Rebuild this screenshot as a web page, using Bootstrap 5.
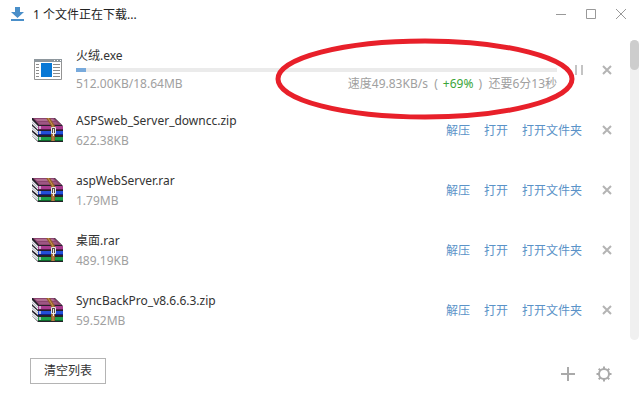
<!DOCTYPE html>
<html lang="zh-CN">
<head>
<meta charset="utf-8">
<meta name="viewport" content="width=device-width, initial-scale=1">
<title>下载</title>
<link href="https://cdn.jsdelivr.net/npm/bootstrap@5.3.0/dist/css/bootstrap.min.css" rel="stylesheet">
<style>
body{font-family:"Noto Sans","Noto Sans CJK SC",sans-serif;font-size:12px;line-height:20px;color:#333;background:#fff}
svg{display:block;flex:none}
.title-bar{height:28px;padding:0 5px 0 10px}
.title-text{padding-top:2px;color:#222}
.icon-btn{border:0;background:none;padding:0;color:#aaa;display:flex;align-items:center;justify-content:center;width:20px;height:20px}
.remove-btn{color:#b4b4b4}
.win-btn{width:30px;height:28px;color:#999}
.list-area{padding-top:12px;padding-right:2px}
.file-row{height:60px;padding:0 13px 0 30px}
.file-icon{width:36px}
.file-main{margin-left:10px;min-width:0}
.file-done{padding-top:2px}
.file-size{color:#a0a0a0}
.file-links{gap:14px;margin-right:15px;padding-top:2px}
.file-link{color:#5b93c8;text-decoration:none}
.dl-bar{height:4px;margin:2px 0;border-radius:0;background:#ebebeb}
.dl-bar .progress-bar{background:#78aadc}
.pause-btn{margin:0 8px 0 12px}
.gain{color:#3aa53a;margin:0 2px}
.ring{position:absolute;right:-18px;top:-36px;pointer-events:none;z-index:2}
.scroll-track{width:9px;background:#f0f0f0;border-radius:5px}
.scroll-thumb{height:30px;background:#cdcdcd;border-radius:5px}
.bottom-bar{padding:18px 27px 17px 30px}
.bottom-tools{gap:16px;margin-top:6px}
.clear-btn{border:1px solid #b4b4b4;border-radius:0;font-size:12px;line-height:18px;padding:3px 13px;color:#333;background:#fff}
</style>
<script src="https://cdn.jsdelivr.net/npm/bootstrap@5.3.0/dist/js/bootstrap.bundle.min.js"></script>
</head>
<body>
<svg width="0" height="0" class="position-absolute" aria-hidden="true">
<symbol id="books" viewBox="0 0 34 26">
<path d="M2 1h23l8 8v16H8l-6-6z" fill="#26202a"/>
<path d="M3 1h21l8 7H9z" fill="#8c4470"/><path d="M5 2h18l2 2H7z" fill="#b06f94"/><path d="M8 5h18l2 2H10z" fill="#9d5783"/>
<path d="M8 9h25v3H8z" fill="#a83c90"/><path d="M8 12h25v1H8z" fill="#5c1c4c"/>
<path d="M8 14h25v3H8z" fill="#2350d8"/><path d="M8 17h25v1H8z" fill="#10208a"/>
<path d="M8 20h25v3H8z" fill="#1fa048"/><path d="M8 23h25v1H8z" fill="#0d6a2c"/>
<path d="m2 3 6 6v4L2 7zM2 9l6 5v4l-6-5zM2 15l6 5v4l-6-5z" fill="#ececf1"/>
<path d="m2 5 6 6M2 11l6 5M2 17l6 5" stroke="#a4a8b2" stroke-width=".7"/>
<path d="M2 8l6 5.500M2 14l6 5" stroke="#2b2830"/>
<path d="M10 9v3M10 14v3M10 20v3" stroke="#e0cfe6" stroke-width="1.500"/>
<path d="m16 1 5 8v15h4V9l-5-8z" fill="#94602c"/><path d="m18 1 5 8v15" fill="none" stroke="#c9984e"/>
<path d="M21.500 10.500h4v6h-4z" fill="#554a44" stroke="#e4e4e4"/><path d="M23 12h1v7h-1z" fill="#eee"/>
</symbol>
<symbol id="cross" viewBox="0 0 10 10"><path d="m1 1 8 8m0-8-8 8" stroke="currentColor" stroke-width="2"/></symbol>
</svg>

<header class="title-bar d-flex align-items-center">
<svg width="15" height="15" viewBox="0 0 15 15" aria-hidden="true"><path d="M5 0h5v5h4l-6.500 6L1 5h4zM1 12h13v2H1z" fill="#4a8fc9"/></svg>
<span class="title-text ms-2">1 个文件正在下载...</span>
<div class="d-flex ms-auto">
<button class="icon-btn win-btn" aria-label="最小化"><svg width="10" height="11"><path d="M0 5.500h10" stroke="currentColor"/></svg></button>
<button class="icon-btn win-btn" aria-label="最大化"><svg width="10" height="10"><path d="M.5.5h9v9h-9z" fill="none" stroke="currentColor"/></svg></button>
<button class="icon-btn win-btn" aria-label="关闭"><svg width="10" height="10"><path d="m0 0 10 10m0-10-10 10" stroke="currentColor"/></svg></button>
</div>
</header>

<main class="list-area d-flex">
<div class="flex-grow-1">
<div class="file-row d-flex align-items-center">
<div class="file-icon"><svg class="ms-1" width="28" height="22" viewBox="0 0 28 22" aria-hidden="true"><path d="M.5.5h27v20H.5z" fill="#fff" stroke="#939393"/><path d="M0 0h28v3H0z" fill="#8e979d"/><path d="M20 1h1v1h-1zm3 0h1v1h-1zm3 0h1v1h-1z" fill="#fff"/><path d="M7 4h11v14H7z" fill="#0878d5"/><path d="M2 5.500h3M2 8.500h3M2 11.500h3M2 14.500h3M2 17.500h3M19 5.500h7M19 8.500h7M19 11.500h7M19 14.500h7M19 17.500h7" stroke="#8c8c8c"/></svg></div>
<div class="file-main flex-grow-1">
<div class="text-truncate">火绒.exe</div>
<div class="progress dl-bar" role="progressbar" aria-label="下载进度" aria-valuenow="2" aria-valuemin="0" aria-valuemax="100"><div class="progress-bar" style="width:2%"></div></div>
<div class="file-size d-flex justify-content-between"><span>512.00KB/18.64MB</span>
<span class="position-relative">速度49.83KB/s&nbsp;&nbsp;( <span class="gain">+69%</span> )&nbsp;&nbsp;还要6分13秒
<svg class="ring" width="300" height="82" viewBox="0 0 300 82" aria-hidden="true"><ellipse cx="150" cy="41" rx="147" ry="38" fill="none" stroke="#e8202a" stroke-width="5"/></svg></span></div>
</div>
<button class="icon-btn pause-btn" aria-label="暂停"><svg width="8" height="10"><path d="M1 0v10M7 0v10" stroke="#c4c4c4" stroke-width="2"/></svg></button>
<button class="icon-btn remove-btn" aria-label="移除 火绒.exe"><svg width="10" height="10"><use href="#cross"/></svg></button>
</div>

<div class="file-row d-flex align-items-center">
<div class="file-icon"><svg width="34" height="26"><use href="#books"/></svg></div>
<div class="file-main file-done flex-grow-1"><div class="text-truncate">ASPSweb_Server_downcc.zip</div><div class="file-size">622.38KB</div></div>
<div class="file-links d-flex"><a class="file-link" href="#">解压</a><a class="file-link" href="#">打开</a><a class="file-link" href="#">打开文件夹</a></div>
<button class="icon-btn remove-btn" aria-label="移除 ASPSweb_Server_downcc.zip"><svg width="10" height="10"><use href="#cross"/></svg></button>
</div>
<div class="file-row d-flex align-items-center">
<div class="file-icon"><svg width="34" height="26"><use href="#books"/></svg></div>
<div class="file-main file-done flex-grow-1"><div class="text-truncate">aspWebServer.rar</div><div class="file-size">1.79MB</div></div>
<div class="file-links d-flex"><a class="file-link" href="#">解压</a><a class="file-link" href="#">打开</a><a class="file-link" href="#">打开文件夹</a></div>
<button class="icon-btn remove-btn" aria-label="移除 aspWebServer.rar"><svg width="10" height="10"><use href="#cross"/></svg></button>
</div>
<div class="file-row d-flex align-items-center">
<div class="file-icon"><svg width="34" height="26"><use href="#books"/></svg></div>
<div class="file-main file-done flex-grow-1"><div class="text-truncate">桌面.rar</div><div class="file-size">489.19KB</div></div>
<div class="file-links d-flex"><a class="file-link" href="#">解压</a><a class="file-link" href="#">打开</a><a class="file-link" href="#">打开文件夹</a></div>
<button class="icon-btn remove-btn" aria-label="移除 桌面.rar"><svg width="10" height="10"><use href="#cross"/></svg></button>
</div>
<div class="file-row d-flex align-items-center">
<div class="file-icon"><svg width="34" height="26"><use href="#books"/></svg></div>
<div class="file-main file-done flex-grow-1"><div class="text-truncate">SyncBackPro_v8.6.6.3.zip</div><div class="file-size">59.52MB</div></div>
<div class="file-links d-flex"><a class="file-link" href="#">解压</a><a class="file-link" href="#">打开</a><a class="file-link" href="#">打开文件夹</a></div>
<button class="icon-btn remove-btn" aria-label="移除 SyncBackPro_v8.6.6.3.zip"><svg width="10" height="10"><use href="#cross"/></svg></button>
</div>
</div>
<div class="scroll-track" aria-hidden="true"><div class="scroll-thumb"></div></div>
</main>

<footer class="bottom-bar d-flex align-items-center">
<button class="btn clear-btn">清空列表</button>
<div class="bottom-tools d-flex ms-auto">
<button class="icon-btn" aria-label="新建下载"><svg width="14" height="14"><path d="M7 0v14M0 7h14" stroke="currentColor" stroke-width="2"/></svg></button>
<button class="icon-btn" aria-label="设置"><svg width="16" height="16" viewBox="0 0 16 16" fill="none" stroke="currentColor" stroke-width="2"><circle cx="8" cy="8" r="5"/><path d="M8 .5V3M8 13v2.500M.5 8H3M13 8h2.500M2.700 2.700l1.700 1.700M11.600 11.600l1.700 1.700M2.700 13.300l1.700-1.700M11.600 4.400l1.700-1.700"/></svg></button>
</div>
</footer>
</body>
</html>
